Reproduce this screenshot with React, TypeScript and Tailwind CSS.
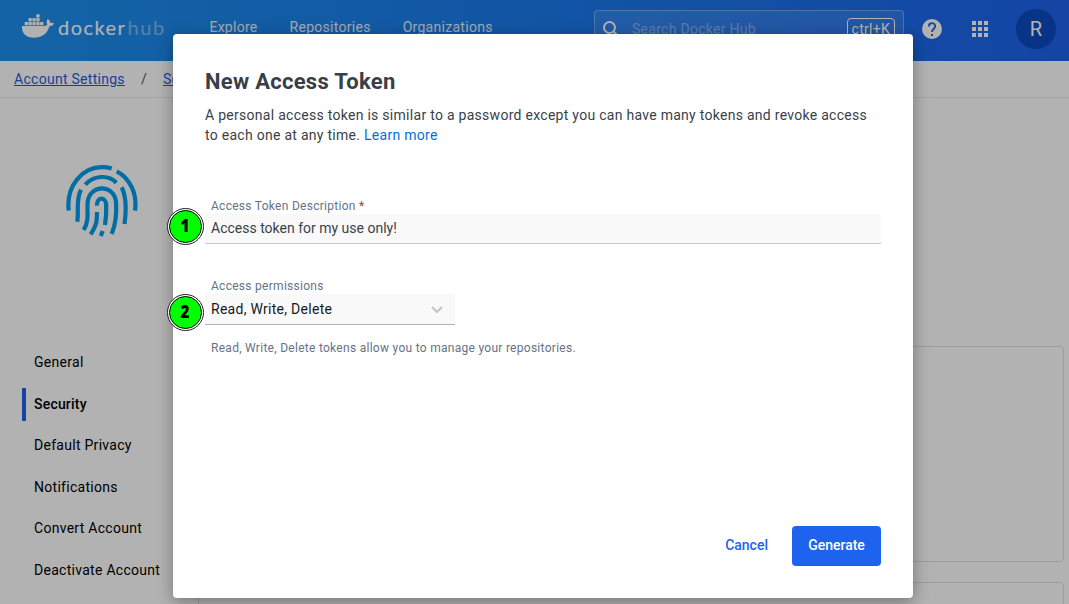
import type { ReactNode } from "react";

function DockerWhale() {
  const boxes: [number, number][] = [
    [2.7, 8], [6.5, 8], [10.4, 8], [14.3, 8], [18.1, 8],
    [6.5, 4.1], [10.4, 4.1], [14.3, 4.1],
    [14.3, 0.3],
  ];
  return (
    <svg width="32" height="24" viewBox="0 0 32 24" fill="white" className="shrink-0">
      {boxes.map(([x, y]) => (
        <rect key={`${x}-${y}`} x={x} y={y} width="3.3" height="3.3" />
      ))}
      <path d="M0 11.900h22.600c1.200 0 2.100-.5 2.700-1.100-1-1.800-.8-4 .4-5.700 1.600 1.100 2.400 2.300 2.600 3.800 1.400-.3 2.800-.1 3.700.6-.9 1.900-2.500 2.700-4.500 2.700C25.200 19.600 20 23.700 11.700 23.700 4.400 23.700-.5 19.400 0 11.900z" />
    </svg>
  );
}

function Fingerprint() {
  return (
    <svg width="74" height="74" viewBox="0 0 74 74" fill="none" stroke="#019ceb" strokeWidth="4.2" strokeLinejoin="round">
      <path d="M3.700 45.600C.8 20 18 2.200 37 2.200c3.300 0 6.700.5 9.700 1.400" />
      <path d="M51.700 6.300C65 13 72.500 29 70 45.600" />
      <path d="M20.300 19.700C29 9.800 44 9.800 51.300 17.700" />
      <path d="M16 24.700C10.500 35 14 45 12.300 56.700" />
      <path d="M56.700 22.300C62 33 61 48 59.500 59" />
      <path d="M18.700 65C25 54 21.500 46 22.700 36.700C25 19 49 19 51 36.700C52 51 50 61 46.700 69" />
      <path d="M25.700 69.300C32 59 32 56 32 47" />
      <path d="M32 40.700C31.500 31 41 32 41.200 40C41.500 48 41 54 40 60" />
      <path d="M37.700 66L35.800 71" />
    </svg>
  );
}

function Header() {
  return (
    <header className="flex h-[61px] shrink-0 items-start bg-linear-to-r from-[#1d90ed] to-[#1d63ed] text-white">
      <div className="flex w-[209.400px] pt-[14px] pl-[22px]">
        <DockerWhale />
        <svg width="112" height="26" className="ml-1 shrink-0 font-[Lato,sans-serif] text-[20px]" fill="white" stroke="white" strokeWidth="0.1">
          <text x="0" y="21" textLength="67">docker</text>
          <text x="69.500" y="21" textLength="37" opacity="0.4">hub</text>
        </svg>
      </div>
      <nav className="flex h-[54px] items-center gap-8 text-white/90">
        <a>Explore</a>
        <a>Repositories</a>
        <a>Organizations</a>
      </nav>
      <div className="mt-[10px] ml-auto flex h-[38px] w-[310px] items-center rounded border border-white/30 bg-white/10 px-2">
        <svg width="16" height="16" viewBox="0 0 16 16" fill="none" stroke="white" strokeWidth="2">
          <circle cx="6.500" cy="6.500" r="5.500" />
          <path d="M10.500 10.500l5 5" />
        </svg>
        <span className="ml-[13px] text-white/40">Search Docker Hub</span>
        <span className="ml-auto flex h-[22px] items-center rounded border border-white px-1">ctrl+K</span>
      </div>
      <svg width="20" height="20" viewBox="0 0 20 20" className="mt-[19px] ml-[18px]">
        <circle cx="10" cy="10" r="10" fill="white" />
        <path d="M6.800 7.500C6.800 3 13.200 3 13.200 7.300C13.200 9.600 10 10 10 13" fill="none" stroke="#1d6aed" strokeWidth="1.900" />
        <path d="M9 15h2v2H9z" fill="#1d6aed" />
      </svg>
      <div className="mt-[21px] ml-[30px] grid grid-cols-3 gap-[2px]">
        {Array.from({ length: 9 }, (_, i) => (
          <i key={i} className="size-1 bg-white" />
        ))}
      </div>
      <div className="mt-[9px] mr-[13px] ml-7 flex size-10 items-center justify-center rounded-full bg-[#0c49c2] text-xl font-normal tracking-normal">R</div>
    </header>
  );
}

const items = ["General", "Security", "Default Privacy", "Notifications", "Convert Account", "Deactivate Account"];

function Sidebar() {
  return (
    <aside className="w-[198px] shrink-0 pt-[67px]">
      <div className="h-[74px] pl-[65px]">
        <Fingerprint />
      </div>
      <ul className="mt-[106.400px] ml-[22px] flex flex-col gap-[8.550px]">
        {items.map((item) => (
          <li
            key={item}
            className={
              item === "Security"
                ? "mt-[0.8px] -mb-[0.8px] flex h-[33px] items-center border-l-4 border-[#1d63ed] pl-2 font-medium tracking-[0.2px] whitespace-nowrap"
                : "flex h-[33px] items-center border-l-4 border-transparent pl-2 whitespace-nowrap"
            }
          >
            {item}
          </li>
        ))}
      </ul>
    </aside>
  );
}

function Step({ children }: { children: ReactNode }) {
  return (
    <div className="flex size-[37px] items-center justify-center rounded-full border border-[#222] bg-white">
      <div className="flex size-[33px] items-center justify-center rounded-full border-[1.5px] border-black bg-[#00ff00] font-['Open_Sans',sans-serif] text-[17px] font-extrabold tracking-normal text-black">
        <span className="scale-x-90">{children}</span>
      </div>
    </div>
  );
}

function TokenDialog() {
  return (
    <section className="mt-[34px] ml-[173px] flex h-[564px] w-[740px] flex-col rounded-sm bg-white px-8 pb-8 text-[#393f49] shadow-[0_4px_16px_rgba(0,0,0,0.35)]">
      <h1 className="mt-[33px] text-[22px] leading-[30px] font-bold">New Access Token</h1>
      <p className="mt-2 pr-2 leading-5">
        A personal access token is similar to a password except you can have many tokens and revoke access to each one at any time. <a className="text-[#086dd7]">Learn more</a>
      </p>
      <label className="mt-[53px] h-4 pl-1.5 text-xs leading-[17px] text-[#677285]">
        Access Token Description <span className="text-[#d52536]">*</span>
      </label>
      <div className="relative flex h-[30px] items-center border-b border-[#c4c8d1] bg-[#f9f9fa] pb-0.5 pl-1.5 tracking-normal">
        <div className="absolute -top-[6.500px] -left-[38.500px]"><Step>1</Step></div>
        Access token for my use only!
      </div>
      <label className="mt-[34px] h-4 pl-1.5 text-xs leading-[17px] text-[#677285]">Access permissions</label>
      <div className="relative flex h-[31px] w-[250px] items-center justify-between border-b border-[#b0b3b8] bg-[#f9f9fa] pr-3 pl-1.5 text-[#17191e]">
        <div className="absolute -top-[0.5px] -left-[38.500px]"><Step>2</Step></div>
        Read, Write, Delete
        <svg width="12" height="8" viewBox="0 0 12 8" fill="none" stroke="#c4c4c4" strokeWidth="2" className="mt-px">
          <path d="M1 1l5 5 5-5" />
        </svg>
      </div>
      <p className="mt-[14px] pl-1.5 text-xs leading-[18px] text-[#677285]">
        Read, Write, Delete tokens allow you to manage your repositories.
      </p>
      <div className="mt-auto flex h-10 items-center justify-end gap-6 font-medium tracking-normal">
        <button className="h-10 pb-0.5 text-[#1d63ed]">Cancel</button>
        <button className="h-10 w-[89px] rounded bg-[#1d63ed] pb-0.5 text-white">Generate</button>
      </div>
    </section>
  );
}

export default function App() {
  return (
    <div className="relative h-[604px] w-[1069px] overflow-hidden bg-white font-[Roboto,sans-serif] text-sm tracking-[0.28px] text-black">
      <div className="flex h-full flex-col">
        <Header />
        <div className="flex h-[37px] shrink-0 items-center border-b border-[#ebebeb] pl-[14px] text-[#1d5ce0]">
          <a className="underline">Account Settings</a>
          <span className="mx-4 text-[#555]">/</span>
          <a className="underline">Security</a>
        </div>
        <div className="flex">
          <Sidebar />
          <main className="flex w-[866px] flex-col pt-[248px]">
            <div className="h-[216px] shrink-0 rounded-sm border border-[#dfe0e8]" />
            <div className="mt-5 h-[216px] shrink-0 rounded-sm border border-[#dfe0e8]" />
          </main>
        </div>
      </div>
      <div className="absolute inset-0 bg-black/30">
        <TokenDialog />
      </div>
    </div>
  );
}
